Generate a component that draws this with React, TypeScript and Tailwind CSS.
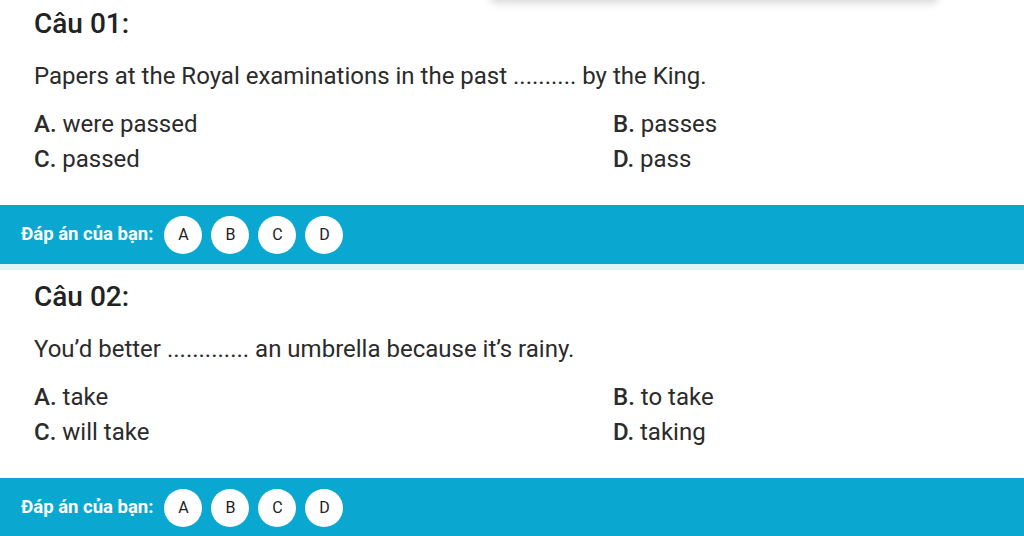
import React from 'react';

interface Question {
  no: string;
  text: string;
  options: { key: string; label: string }[];
}

const questions: Question[] = [
  {
    no: '01',
    text: 'Papers at the Royal examinations in the past .......... by the King.',
    options: [
      { key: 'A', label: 'were passed' },
      { key: 'B', label: 'passes' },
      { key: 'C', label: 'passed' },
      { key: 'D', label: 'pass' },
    ],
  },
  {
    no: '02',
    text: 'You\u2019d better ............. an umbrella because it\u2019s rainy.',
    options: [
      { key: 'A', label: 'take' },
      { key: 'B', label: 'to take' },
      { key: 'C', label: 'will take' },
      { key: 'D', label: 'taking' },
    ],
  },
];

const AnswerBar: React.FC = () => (
  <div>
    <div className="h-[59px] bg-[#0aa8d1] flex items-center pl-[21px] gap-[9px]">
      <span className="text-white font-bold text-[18.5px] whitespace-nowrap mr-[2px]">Đáp án của bạn:</span>
      {['A', 'B', 'C', 'D'].map((k) => (
        <button
          key={k}
          className="w-[38px] h-[38px] shrink-0 rounded-full bg-white text-[#222] text-[16px] flex items-center justify-center"
        >
          {k}
        </button>
      ))}
    </div>
    <div className="h-[6px] bg-[#e2f3f5]" />
  </div>
);

const QuestionBlock: React.FC<{ q: Question }> = ({ q }) => (
  <div>
    <div className="pl-[34px] pr-[34px] pt-[12px] pb-[28px]">
      <h3 className="text-[28px] leading-[30px] font-medium text-[#222]">Câu {q.no}:</h3>
      <p className="mt-[22px] text-[24px] leading-[30px] text-[#2b2b2b] whitespace-nowrap">{q.text}</p>
      <div className="mt-[16px] grid grid-cols-[579px_1fr]">
        {q.options.map((o) => (
          <div key={o.key} className="text-[24px] leading-[35px] text-[#2b2b2b] whitespace-nowrap">
            <span className="font-medium">{o.key}.</span> {o.label}
          </div>
        ))}
      </div>
    </div>
    <AnswerBar />
  </div>
);

export default function App() {
  return (
    <div className="relative w-[1024px] h-[536px] overflow-hidden bg-white" style={{ fontFamily: 'Roboto, "Noto Sans", sans-serif' }}>
      <div className="absolute left-[490px] top-[-40px] w-[448px] h-[40px] bg-white shadow-[0_3px_9px_rgba(0,0,0,0.16)] rounded-b-[6px] z-10" />
      <div className="-mt-[3px]">
        {questions.map((q) => (
          <QuestionBlock key={q.no} q={q} />
        ))}
      </div>
    </div>
  );
}
